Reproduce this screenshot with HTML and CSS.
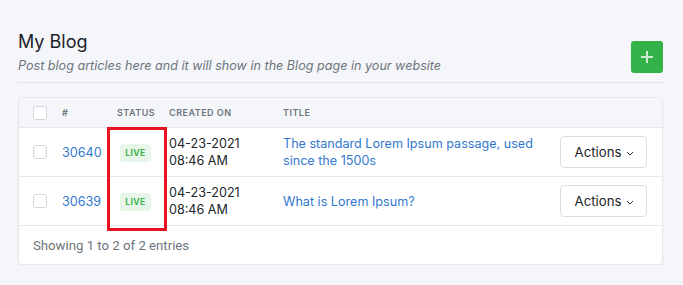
FILE: index.html
```html
<!DOCTYPE html>
<html>
<head>
<meta charset="utf-8">
<link rel="stylesheet" href="styles.css">
</head>
<body>
<div class="page">
  <div class="head">
    <div class="head-text">
      <h1 class="title">My Blog</h1>
      <p class="subtitle">Post blog articles here and it will show in the Blog page in your website</p>
    </div>
    <button class="add-btn" aria-label="Add">
      <svg width="14" height="14" viewBox="0 0 14 14"><path d="M7 1v12M1 7h12" stroke="rgba(255,255,255,0.75)" stroke-width="2" fill="none"/></svg>
    </button>
  </div>
  <div class="card">
    <div class="row row-head">
      <div><span class="check"></span></div>
      <div>#</div>
      <div>Status</div>
      <div>Created On</div>
      <div>Title</div>
      <div></div>
    </div>
    <div class="row row-body">
      <div><span class="check"></span></div>
      <div><a class="link">30640</a></div>
      <div><span class="badge">LIVE</span></div>
      <div class="date">04-23-2021<br>08:46 AM</div>
      <div><a class="link">The standard Lorem Ipsum passage, used since the 1500s</a></div>
      <div><button class="actions">Actions<svg width="8" height="5" viewBox="0 0 8 5"><path d="M1 1l3 3 3-3" stroke="#333" stroke-width="1" fill="none"/></svg></button></div>
    </div>
    <div class="row row-body">
      <div><span class="check"></span></div>
      <div><a class="link">30639</a></div>
      <div><span class="badge">LIVE</span></div>
      <div class="date">04-23-2021<br>08:46 AM</div>
      <div><a class="link">What is Lorem Ipsum?</a></div>
      <div><button class="actions">Actions<svg width="8" height="5" viewBox="0 0 8 5"><path d="M1 1l3 3 3-3" stroke="#333" stroke-width="1" fill="none"/></svg></button></div>
    </div>
    <div class="foot">Showing 1 to 2 of 2 entries</div>
    <div class="highlight"></div>
  </div>
</div>
</body>
</html>
```
FILE: styles.css
```css
* { box-sizing: border-box; }
body {
  margin: 0;
  background: #f5f6fa;
  font-family: Inter, "Noto Sans", sans-serif;
  color: #212529;
}
.page {
  padding: 31px 20px 0 18px;
}
.head {
  display: flex;
  justify-content: space-between;
  align-items: flex-end;
  padding-bottom: 7px;
  border-bottom: 1px solid #dfe2e7;
}
.title {
  margin: 0;
  font-size: 18px;
  line-height: 22px;
  font-weight: 400;
  color: #1e222b;
}
.subtitle {
  margin: 4px 0 0;
  font-size: 12.6px;
  line-height: 18px;
  font-style: italic;
  color: #6c757d;
}
.add-btn {
  width: 32px;
  height: 32px;
  margin-bottom: 2px;
  border: 0;
  border-radius: 3px;
  background: #34b24a;
  display: flex;
  align-items: center;
  justify-content: center;
  padding: 0;
}
.card {
  position: relative;
  margin-top: 14px;
  background: #fff;
  border: 1px solid #e4e7eb;
  border-radius: 4px;
  box-shadow: 0 1px 2px rgba(0,0,0,0.05);
}
.row {
  display: grid;
  grid-template-columns: 29px 55px 52px 114px 277px 87px;
  padding: 0 15px 0 14px;
  align-items: center;
  border-bottom: 1px solid #e6e8ec;
}
.row-head {
  height: 30px;
  background: #f5f6f9;
  font-size: 9px;
  font-weight: 600;
  letter-spacing: 0.5px;
  text-transform: uppercase;
  color: #6c757d;
  border-radius: 4px 4px 0 0;
}
.row-body {
  height: 49px;
  font-size: 12.6px;
  line-height: 17px;
}
.check {
  display: block;
  width: 14px;
  height: 14px;
  border: 1px solid #d3d6db;
  border-radius: 3px;
  background: #fff;
}
.link {
  color: #3179cf;
  text-decoration: none;
}
.date {
  color: #212529;
}
.badge {
  display: inline-block;
  margin-left: 3px;
  width: 31px;
  height: 18px;
  line-height: 18px;
  text-align: center;
  font-size: 8.5px;
  font-weight: 700;
  letter-spacing: 0.4px;
  color: #3db34e;
  background: #e8f6ea;
  border-radius: 3px;
}
.actions {
  width: 87px;
  height: 32px;
  background: #fff;
  border: 1px solid #dadde1;
  border-radius: 4px;
  font-family: Inter, "Noto Sans", sans-serif;
  font-size: 13.2px;
  color: #212529;
  display: flex;
  align-items: center;
  justify-content: center;
  gap: 5px;
  padding: 0 0 0 2px;
}
.actions svg { margin-top: 2px; }
.foot {
  height: 38px;
  display: flex;
  align-items: center;
  padding: 0 15px 0 14px;
  font-family: Roboto, "Liberation Sans", sans-serif;
  font-size: 13.2px;
  color: #6c757d;
}
.highlight {
  position: absolute;
  left: 88px;
  top: 29px;
  width: 60px;
  height: 104px;
  border: 3px solid #e6141e;
  pointer-events: none;
}
```
